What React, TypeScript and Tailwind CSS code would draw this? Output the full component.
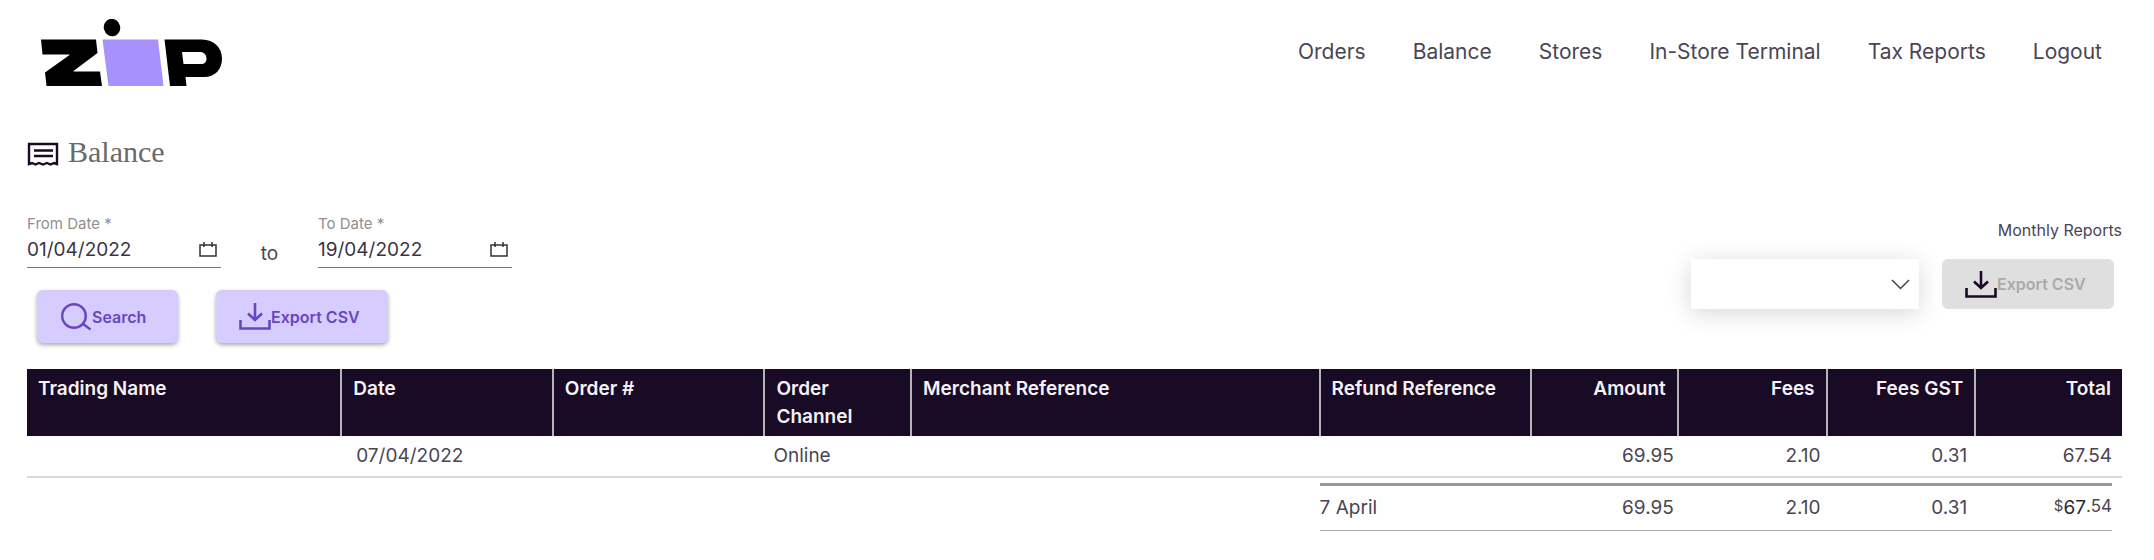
import { useState } from "react";

const navItems = ["Orders", "Balance", "Stores", "In-Store Terminal", "Tax Reports", "Logout"];

const columns = [
  { label: "Trading Name", width: "w-[15%]", align: "text-left" },
  { label: "Date", width: "w-[10.1%]", align: "text-left" },
  { label: "Order #", width: "w-[10.1%]", align: "text-left" },
  { label: "Order Channel", width: "w-[7%]", align: "text-left" },
  { label: "Merchant Reference", width: "w-[19.5%]", align: "text-left" },
  { label: "Refund Reference", width: "w-[10.1%]", align: "text-left" },
  { label: "Amount", width: "w-[7%]", align: "text-right" },
  { label: "Fees", width: "w-[7.1%]", align: "text-right" },
  { label: "Fees GST", width: "w-[7.1%]", align: "text-right" },
  { label: "Total", width: "w-[7%]", align: "text-right" },
];

function ZipLogo() {
  return (
    <svg width="182" height="68" viewBox="0 0 182 68" role="img" aria-label="Zip">
      <path
        d="M0 20.500H55L56.500 34L32.500 52V52.500H59L61 67H5.500L4 53.500L28.500 36V35.500H1.500Z"
        fill="#000"
      />
      <path d="M61.500 20.500H117L122.500 67H67.500Z" fill="#a791fc" />
      <ellipse cx="71" cy="8.500" rx="8.200" ry="8.700" transform="rotate(-15 71 8.500)" fill="#000" />
      <path
        fillRule="evenodd"
        d="M123.500 20.500H161C173 20.500 181 29 181 39.500C181 50.500 174 58 163 58H144.500L145.500 67H129ZM141 33L142.500 45H160C163.500 45 165.500 43 165.500 39.500C165.500 35.500 162.500 33 159 33Z"
        fill="#000"
      />
    </svg>
  );
}

function ReceiptIcon() {
  return (
    <svg width="32" height="24" viewBox="0 0 32 24" fill="none" stroke="#1a0826" strokeWidth="2.400" aria-hidden="true">
      <path d="M2 22V2H30V22L27 21L23.500 22.500L20 21L16 22.500L12 21L8.500 22.500L5 21Z" />
      <path d="M7 8.500H26M7 14H26" />
    </svg>
  );
}

function CalendarIcon() {
  return (
    <svg width="18" height="15" viewBox="0 0 18 15" fill="none" stroke="#333" strokeWidth="1.500" aria-hidden="true">
      <path d="M1 3H17V14H1ZM5 0V5M13 0V5" />
    </svg>
  );
}

function SearchIcon() {
  return (
    <svg width="31" height="27" viewBox="0 0 31 27" fill="none" stroke="currentColor" strokeWidth="2.400" aria-hidden="true">
      <circle cx="13" cy="13" r="11.800" />
      <path d="M21.500 20.500L29.500 26.500" />
    </svg>
  );
}

function DownloadIcon() {
  return (
    <svg width="32" height="27" viewBox="0 0 32 27" fill="none" stroke="currentColor" strokeWidth="2.600" aria-hidden="true">
      <path d="M1.500 17V25.500H30.500V17" />
      <path d="M16 0V17M9 10.500L16 17L23 10.500" />
    </svg>
  );
}

function DateField({ id, label, initial }: { id: string; label: string; initial: string }) {
  const [value, setValue] = useState(initial);
  return (
    <div className="w-[194px] border-b border-[#777]">
      <label htmlFor={id} className="block text-[15px] leading-4 text-[#8f8f8f]">
        {label}
      </label>
      <div className="flex h-[35px] items-center pr-1">
        <input
          id={id}
          value={value}
          onChange={(e) => setValue(e.target.value)}
          className="w-full min-w-0 bg-transparent text-[19px] leading-6 text-[#3a3544] outline-none"
        />
        <button type="button" aria-label={"Choose " + label}>
          <CalendarIcon />
        </button>
      </div>
    </div>
  );
}

export default function App() {
  return (
    <div className="min-h-screen bg-white font-['Inter',sans-serif] text-[#4a4553]">
      <header className="flex items-start justify-between pt-[19px] pr-[52px] pl-[41px]">
        <a href="#home">
          <ZipLogo />
        </a>
        <nav className="flex gap-[47px] pt-[19px] text-[21px] leading-7">
          {navItems.map((item) => (
            <a key={item} href="#nav" className="whitespace-nowrap">
              {item}
            </a>
          ))}
        </nav>
      </header>

      <main className="pr-8 pl-[27px]">
        <h1 className="mt-[47px] flex items-start gap-[9px] font-['Liberation_Serif',serif] text-[30px] leading-9 text-[#6a6a6a]">
          <span className="pt-2">
            <ReceiptIcon />
          </span>
          Balance
        </h1>

        <div className="mt-[46px] flex items-start justify-between">
          <form onSubmit={(e) => e.preventDefault()}>
            <div className="flex items-start">
              <DateField id="from" label="From Date *" initial="01/04/2022" />
              <span className="w-[97px] pt-6 text-center text-[19px] leading-7">to</span>
              <DateField id="to" label="To Date *" initial="19/04/2022" />
            </div>
            <div className="mt-[22px] flex gap-[38px] pl-2.5 text-[16px] font-semibold text-[#6846c0]">
              <button
                type="submit"
                className="flex h-[53px] w-[141px] items-center rounded-md bg-[#d6ccff] pl-6 shadow-[0_2px_4px_rgba(0,0,0,0.35)]"
              >
                <SearchIcon />
                Search
              </button>
              <button
                type="button"
                className="flex h-[53px] w-[172px] items-center rounded-md bg-[#d6ccff] pl-[23px] shadow-[0_2px_4px_rgba(0,0,0,0.35)]"
              >
                <DownloadIcon />
                Export CSV
              </button>
            </div>
          </form>

          <div className="pt-1">
            <label htmlFor="report" className="block text-right text-[16px] leading-5">
              Monthly Reports
            </label>
            <div className="mt-[19px] flex gap-[23px] pr-2">
              <div className="grid h-[50px] w-[228px] items-center bg-white shadow-[0_4px_24px_rgba(0,0,0,0.16)]">
                <select id="report" className="col-start-1 row-start-1 h-full w-full appearance-none bg-transparent px-3 outline-none">
                  <option value=""></option>
                </select>
                <svg
                  className="pointer-events-none col-start-1 row-start-1 mr-[9px] justify-self-end"
                  width="19"
                  height="11"
                  viewBox="0 0 19 11"
                  fill="none"
                  stroke="#444"
                  strokeWidth="1.500"
                  aria-hidden="true"
                >
                  <path d="M1 1L9.500 9.500L18 1" />
                </svg>
              </div>
              <button
                type="button"
                disabled
                className="flex h-[50px] w-[172px] items-center rounded-md bg-[#dfdfdf] pl-[23px] text-[16px] font-semibold text-[#aaa]"
              >
                <span className="text-[#1a0826]">
                  <DownloadIcon />
                </span>
                Export CSV
              </button>
            </div>
          </div>
        </div>

        <table className="mt-[26px] w-full table-fixed border-collapse text-[19px]">
          <thead className="bg-[#190a26] text-[19px] leading-7 text-[#f4f2f6]">
            <tr>
              {columns.map((c) => (
                <th
                  key={c.label}
                  scope="col"
                  className={`${c.width} ${c.align} border-r-2 border-[#b5b5b5] px-[11px] pt-1.5 pb-[5px] align-top font-semibold last:border-r-0`}
                >
                  {c.label}
                </th>
              ))}
            </tr>
          </thead>
          <tbody>
            <tr className="h-[41px] border-b-2 border-[#d9d9d9]">
              <td />
              <td className="pl-[15px]">07/04/2022</td>
              <td />
              <td className="pl-[9px]">Online</td>
              <td />
              <td />
              <td className="pr-1 text-right">69.95</td>
              <td className="pr-1.5 text-right">2.10</td>
              <td className="pr-2 text-right">0.31</td>
              <td className="pr-2.5 text-right">67.54</td>
            </tr>
          </tbody>
          <tfoot>
            <tr className="leading-[44px]">
              <td colSpan={5} />
              <td className="pt-[5px]">
                <div className="border-t-3 border-b border-t-[#999] border-b-[#aaa]">7 April</div>
              </td>
              <td className="pt-[5px] text-right">
                <div className="border-t-3 border-b border-t-[#999] border-b-[#aaa] pr-1">69.95</div>
              </td>
              <td className="pt-[5px] text-right">
                <div className="border-t-3 border-b border-t-[#999] border-b-[#aaa] pr-1.5">2.10</div>
              </td>
              <td className="pt-[5px] text-right">
                <div className="border-t-3 border-b border-t-[#999] border-b-[#aaa] pr-2">0.31</div>
              </td>
              <td className="pt-[5px] pr-2.5 text-right">
                <div className="flex h-12 items-start justify-end border-t-3 border-b border-t-[#999] border-b-[#aaa]">
                  <span className="text-[15px] leading-10">$</span>
                  <span className="leading-[43px] text-[#2c2735]">67</span>
                  <span className="text-[17px] leading-[41px]">.54</span>
                </div>
              </td>
            </tr>
          </tfoot>
        </table>
      </main>
    </div>
  );
}
